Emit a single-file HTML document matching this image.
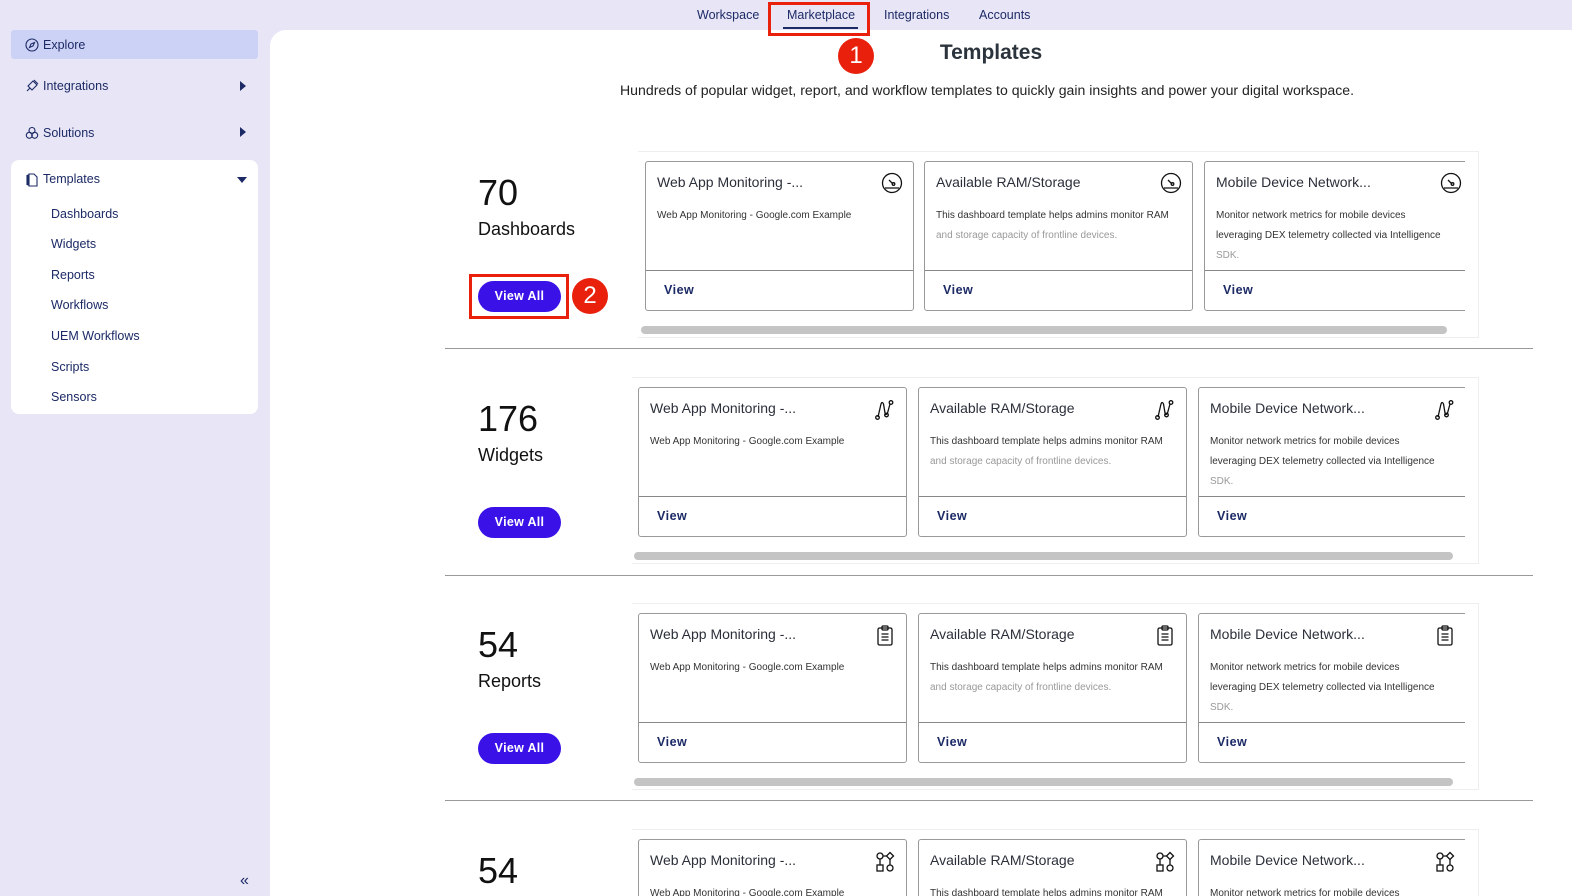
<!DOCTYPE html>
<html><head><meta charset="utf-8"><style>
*{margin:0;padding:0;box-sizing:border-box}
html,body{width:1572px;height:896px;overflow:hidden}
body{background:#e8e6f6;font-family:"Liberation Sans",sans-serif;position:relative;color:#1a1f36}
.a{position:absolute}
.nav{font-size:12.5px;color:#1c2a66;top:8px}
.side{font-size:12.5px;color:#1c2a66}
.card{position:absolute;width:269px;height:150px;border:1px solid #999;border-radius:3px;background:#fff;overflow:hidden}
.card.s{height:57px;border-bottom:none;border-radius:3px 3px 0 0}
.card .t{position:absolute;left:11px;top:12px;font-size:14px;color:#2b2f3a}
.card .d{position:absolute;left:11px;top:44px;width:238px;font-size:10px;line-height:20px;color:#333}
.card .d .f{color:#999}
.card .ft{position:absolute;left:0;right:0;top:108px;border-top:1px solid #888}
.card .v{position:absolute;left:18px;top:121px;font-size:12.5px;font-weight:bold;color:#1c2a66;letter-spacing:.5px}
.card svg{position:absolute;right:10px;top:10px}
.num{font-size:36px;color:#111;left:478px}
.lab{font-size:18px;color:#111;left:478px}
.btn{position:absolute;left:478px;width:83px;height:31px;border-radius:16px;background:#3a12e8;color:#fff;font-size:12.5px;font-weight:bold;text-align:center;line-height:31px;letter-spacing:.3px}
.wrap{position:absolute;border:1px solid #eee;border-left:none;background:#fff}
.sb{position:absolute;height:8px;border-radius:4px;background:#c4c4c4}
.hr{position:absolute;left:445px;width:1088px;height:1px;background:#999}
.red{position:absolute;border:3px solid #e8200c}
.dot{position:absolute;width:36px;height:36px;border-radius:50%;background:#e8200c;color:#fff;font-size:24px;text-align:center;line-height:36px}
</style></head><body>
<div class="a nav" style="left:697px">Workspace</div>
<div class="a nav" style="left:787px">Marketplace</div>
<div class="a" style="left:783px;top:27px;width:75px;height:2px;background:#1c2a66"></div>
<div class="a nav" style="left:884px">Integrations</div>
<div class="a nav" style="left:979px">Accounts</div>

<div class="a" style="left:11px;top:30px;width:247px;height:29px;background:#ccd2f5;border-radius:3px"></div>
<svg class="a" style="left:25px;top:38px" width="14" height="14" viewBox="0 0 14 14" fill="none" stroke="#1c2a66" stroke-width="1.1"><circle cx="7" cy="7" r="6"/><path d="M9.5 4.5L8 8 4.5 9.5 6 6z"/></svg>
<div class="a side" style="left:43px;top:38px">Explore</div>
<svg class="a" style="left:25px;top:79px" width="14" height="14" viewBox="0 0 14 14" fill="none" stroke="#1c2a66" stroke-width="1.1"><path d="M2 12l3-3M8 2l4 4-5 5-4-4z M9 1l4 4"/></svg>
<div class="a side" style="left:43px;top:79px">Integrations</div>
<div class="a" style="left:240px;top:81px;border-left:6px solid #1c2a66;border-top:5px solid transparent;border-bottom:5px solid transparent"></div>
<svg class="a" style="left:25px;top:126px" width="14" height="14" viewBox="0 0 14 14" fill="none" stroke="#1c2a66" stroke-width="1.1"><circle cx="7" cy="4.5" r="3"/><circle cx="4.3" cy="9.3" r="3"/><circle cx="9.7" cy="9.3" r="3"/></svg>
<div class="a side" style="left:43px;top:126px">Solutions</div>
<div class="a" style="left:240px;top:127px;border-left:6px solid #1c2a66;border-top:5px solid transparent;border-bottom:5px solid transparent"></div>
<div class="a" style="left:11px;top:160px;width:247px;height:254px;background:#fff;border-radius:8px"></div>
<svg class="a" style="left:25px;top:172px" width="14" height="15" viewBox="0 0 14 15" fill="none" stroke="#1c2a66" stroke-width="1.1"><path d="M4 2h5l3 3v9H4z M2 3v10M3 2.5v11"/></svg>
<div class="a side" style="left:43px;top:172px">Templates</div>
<div class="a" style="left:237px;top:177px;border-top:6px solid #1c2a66;border-left:5px solid transparent;border-right:5px solid transparent"></div>
<div class="a side" style="left:51px;top:207px">Dashboards</div>
<div class="a side" style="left:51px;top:237px">Widgets</div>
<div class="a side" style="left:51px;top:268px">Reports</div>
<div class="a side" style="left:51px;top:298px">Workflows</div>
<div class="a side" style="left:51px;top:329px">UEM Workflows</div>
<div class="a side" style="left:51px;top:360px">Scripts</div>
<div class="a side" style="left:51px;top:390px">Sensors</div>
<div class="a" style="left:240px;top:872px;font-size:16px;color:#1c2a66">«</div>

<div class="a" style="left:270px;top:30px;width:1302px;height:866px;background:#fff;border-top-left-radius:16px"></div>
<div class="a" style="left:0;width:1572px;top:41px;text-align:center;font-size:21px;font-weight:bold;color:#2b333c;padding-left:410px">Templates</div>
<div class="a" style="left:620px;top:82px;font-size:14.1px;color:#222;white-space:nowrap">Hundreds of popular widget, report, and workflow templates to quickly gain insights and power your digital workspace.</div>

<div class="a num" style="top:172px">70</div>
<div class="a lab" style="top:219px">Dashboards</div>
<div class="btn" style="top:281px">View All</div>
<div class="wrap" style="left:638px;top:151px;width:841px;height:187px"></div>
<div class="sb" style="left:641px;top:326px;width:806px"></div>
<div class="hr" style="top:348px"></div>

<div class="a num" style="top:398px">176</div>
<div class="a lab" style="top:445px">Widgets</div>
<div class="btn" style="top:507px">View All</div>
<div class="wrap" style="left:632px;top:377px;width:847px;height:187px"></div>
<div class="sb" style="left:634px;top:552px;width:819px"></div>
<div class="hr" style="top:575px"></div>

<div class="a num" style="top:624px">54</div>
<div class="a lab" style="top:671px">Reports</div>
<div class="btn" style="top:733px">View All</div>
<div class="wrap" style="left:632px;top:603px;width:847px;height:187px"></div>
<div class="sb" style="left:634px;top:778px;width:819px"></div>
<div class="hr" style="top:800px"></div>

<div class="a num" style="top:850px">54</div>
<div class="wrap" style="left:632px;top:829px;width:847px;height:67px;border-bottom:none"></div>

<div class="a" style="left:0;top:0;width:1465px;height:896px;overflow:hidden">
<div class="card" style="left:645px;top:161px"><div class="t">Web App Monitoring -...</div><svg width="22" height="22" viewBox="0 0 22 22" fill="none" stroke="#111" stroke-width="1.3"><circle cx="11" cy="11" r="9.5"/><path d="M4 16h14M8 8l4 4"/><circle cx="12.5" cy="12" r="1.3"/></svg><div class="d">Web App Monitoring - Google.com Example</div><div class="ft"></div><div class="v">View</div></div>
<div class="card" style="left:924px;top:161px"><div class="t">Available RAM/Storage</div><svg width="22" height="22" viewBox="0 0 22 22" fill="none" stroke="#111" stroke-width="1.3"><circle cx="11" cy="11" r="9.5"/><path d="M4 16h14M8 8l4 4"/><circle cx="12.5" cy="12" r="1.3"/></svg><div class="d">This dashboard template helps admins monitor RAM <span class="f">and storage capacity of frontline devices.</span></div><div class="ft"></div><div class="v">View</div></div>
<div class="card" style="left:1204px;top:161px"><div class="t">Mobile Device Network...</div><svg width="22" height="22" viewBox="0 0 22 22" fill="none" stroke="#111" stroke-width="1.3"><circle cx="11" cy="11" r="9.5"/><path d="M4 16h14M8 8l4 4"/><circle cx="12.5" cy="12" r="1.3"/></svg><div class="d">Monitor network metrics for mobile devices leveraging DEX telemetry collected via Intelligence <span class="f">SDK.</span></div><div class="ft"></div><div class="v">View</div></div>

<div class="card" style="left:638px;top:387px"><div class="t">Web App Monitoring -...</div><svg width="22" height="24" viewBox="0 0 22 24" fill="none" stroke="#111" stroke-width="1.3"><path d="M4 19L7 6Q8 3 9.5 6L11 15Q12 18 13.5 15L16 6"/><circle cx="3.5" cy="19.5" r="1.8"/><circle cx="12.5" cy="17" r="1.8"/><circle cx="17" cy="4.5" r="1.8"/></svg><div class="d">Web App Monitoring - Google.com Example</div><div class="ft"></div><div class="v">View</div></div>
<div class="card" style="left:918px;top:387px"><div class="t">Available RAM/Storage</div><svg width="22" height="24" viewBox="0 0 22 24" fill="none" stroke="#111" stroke-width="1.3"><path d="M4 19L7 6Q8 3 9.5 6L11 15Q12 18 13.5 15L16 6"/><circle cx="3.5" cy="19.5" r="1.8"/><circle cx="12.5" cy="17" r="1.8"/><circle cx="17" cy="4.5" r="1.8"/></svg><div class="d">This dashboard template helps admins monitor RAM <span class="f">and storage capacity of frontline devices.</span></div><div class="ft"></div><div class="v">View</div></div>
<div class="card" style="left:1198px;top:387px"><div class="t">Mobile Device Network...</div><svg width="22" height="24" viewBox="0 0 22 24" fill="none" stroke="#111" stroke-width="1.3"><path d="M4 19L7 6Q8 3 9.5 6L11 15Q12 18 13.5 15L16 6"/><circle cx="3.5" cy="19.5" r="1.8"/><circle cx="12.5" cy="17" r="1.8"/><circle cx="17" cy="4.5" r="1.8"/></svg><div class="d">Monitor network metrics for mobile devices leveraging DEX telemetry collected via Intelligence <span class="f">SDK.</span></div><div class="ft"></div><div class="v">View</div></div>

<div class="card" style="left:638px;top:613px"><div class="t">Web App Monitoring -...</div><svg width="22" height="24" viewBox="0 0 22 24" fill="none" stroke="#111" stroke-width="1.3"><rect x="4" y="4" width="14" height="17" rx="1.5"/><rect x="8" y="2" width="6" height="4" rx="1"/><path d="M7.5 10h7M7.5 13h7M7.5 16h7"/></svg><div class="d">Web App Monitoring - Google.com Example</div><div class="ft"></div><div class="v">View</div></div>
<div class="card" style="left:918px;top:613px"><div class="t">Available RAM/Storage</div><svg width="22" height="24" viewBox="0 0 22 24" fill="none" stroke="#111" stroke-width="1.3"><rect x="4" y="4" width="14" height="17" rx="1.5"/><rect x="8" y="2" width="6" height="4" rx="1"/><path d="M7.5 10h7M7.5 13h7M7.5 16h7"/></svg><div class="d">This dashboard template helps admins monitor RAM <span class="f">and storage capacity of frontline devices.</span></div><div class="ft"></div><div class="v">View</div></div>
<div class="card" style="left:1198px;top:613px"><div class="t">Mobile Device Network...</div><svg width="22" height="24" viewBox="0 0 22 24" fill="none" stroke="#111" stroke-width="1.3"><rect x="4" y="4" width="14" height="17" rx="1.5"/><rect x="8" y="2" width="6" height="4" rx="1"/><path d="M7.5 10h7M7.5 13h7M7.5 16h7"/></svg><div class="d">Monitor network metrics for mobile devices leveraging DEX telemetry collected via Intelligence <span class="f">SDK.</span></div><div class="ft"></div><div class="v">View</div></div>

<div class="card s" style="left:638px;top:839px"><div class="t">Web App Monitoring -...</div><svg width="22" height="24" viewBox="0 0 22 24" fill="none" stroke="#111" stroke-width="1.3"><circle cx="6" cy="6" r="3"/><path d="M16 2.5l3.5 3.5-3.5 3.5-3.5-3.5z"/><rect x="3" y="15" width="6" height="6"/><circle cx="16" cy="18" r="3"/><path d="M6 9v6M16 9.5v5.5M9 6h3.5"/></svg><div class="d">Web App Monitoring - Google.com Example</div></div>
<div class="card s" style="left:918px;top:839px"><div class="t">Available RAM/Storage</div><svg width="22" height="24" viewBox="0 0 22 24" fill="none" stroke="#111" stroke-width="1.3"><circle cx="6" cy="6" r="3"/><path d="M16 2.5l3.5 3.5-3.5 3.5-3.5-3.5z"/><rect x="3" y="15" width="6" height="6"/><circle cx="16" cy="18" r="3"/><path d="M6 9v6M16 9.5v5.5M9 6h3.5"/></svg><div class="d">This dashboard template helps admins monitor RAM</div></div>
<div class="card s" style="left:1198px;top:839px"><div class="t">Mobile Device Network...</div><svg width="22" height="24" viewBox="0 0 22 24" fill="none" stroke="#111" stroke-width="1.3"><circle cx="6" cy="6" r="3"/><path d="M16 2.5l3.5 3.5-3.5 3.5-3.5-3.5z"/><rect x="3" y="15" width="6" height="6"/><circle cx="16" cy="18" r="3"/><path d="M6 9v6M16 9.5v5.5M9 6h3.5"/></svg><div class="d">Monitor network metrics for mobile devices</div></div>
</div>

<div class="red" style="left:768px;top:2px;width:102px;height:34px"></div>
<div class="dot" style="left:838px;top:38px">1</div>
<div class="red" style="left:469px;top:274px;width:100px;height:45px"></div>
<div class="dot" style="left:572px;top:278px">2</div>
</body></html>
